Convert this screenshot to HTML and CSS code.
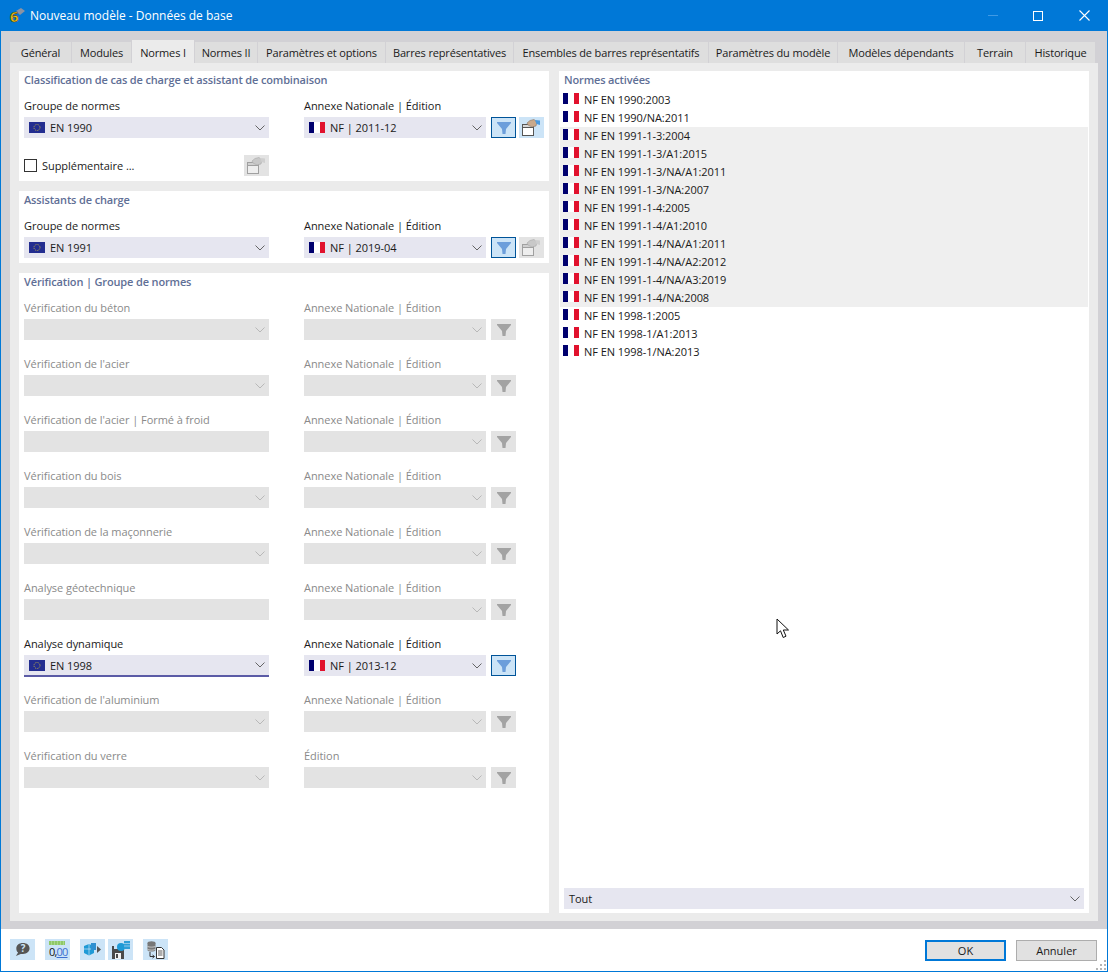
FILE: index.html
```html
<!DOCTYPE html>
<html lang="fr">
  <head>
    <meta charset="UTF-8" />
    <title>Nouveau modèle - Données de base</title>
    <link rel="stylesheet" href="styles.css">
  </head>
  <body>
    <svg class="defs" width="0" height="0">
      <symbol id="fr" viewBox="0 0 16 11">
        <rect width="6" height="11" fill="#00006e" />
        <rect x="5" width="6" height="11" fill="#fff" />
        <rect x="11" width="5" height="11" fill="#e1112d" />
      </symbol>
      <symbol id="eu" viewBox="0 0 16 11">
        <rect width="16" height="11" fill="#232d90" />
        <circle cx="8" cy="5.5" r="3" fill="none" stroke="#b7a94a" stroke-width="1" stroke-dasharray="1 .9" />
      </symbol>
      <symbol id="chev" viewBox="0 0 10 6">
        <path d="M.5 .5 5 5 9.5 .5" fill="none" stroke="currentColor" stroke-width=".9" />
      </symbol>
      <symbol id="funnel" viewBox="0 0 14 12">
        <path d="M0 0H14V1L9 7 8.500 12H5.500L5 7 0 1Z" fill="currentColor" />
      </symbol>
      <symbol id="pick" viewBox="0 0 19 17">
        <rect x=".5" y="5.5" width="11" height="11" fill="#fff" stroke="#555" />
        <rect x=".5" y="5.5" width="11" height="3" fill="#d8d8d8" stroke="#555" />
        <path d="M5 4 8 1.5 12 .5 15 3 14 7 10 8 6 6Z" fill="#c9a98c" stroke="#8a7565" stroke-width=".6" />
        <path d="M13 1 18 1.5 18 6 14.5 5Z" fill="#4d9ade" />
      </symbol>
      <symbol id="pick-off" viewBox="0 0 19 17">
        <rect x=".5" y="5.5" width="11" height="11" fill="#eee" stroke="#a0a0a0" />
        <rect x=".5" y="5.5" width="11" height="3" fill="#d0d0d0" stroke="#a0a0a0" />
        <path d="M5 4 8 1.5 12 .5 15 3 14 7 10 8 6 6Z" fill="#c8c8c8" stroke="#aaa" stroke-width=".6" />
        <path d="M13 1 18 1.5 18 6 14.5 5Z" fill="#cfcfcf" />
      </symbol>
    </svg>

    <div class="window">
      <div class="titlebar">
        <svg class="app-icon" width="16" height="24" viewBox="0 0 16 24">
          <path d="M7 7 12 4 16 7 11 11Z" fill="#8b93a3" />
          <text x="1" y="18" class="six">6</text>
        </svg>
        <span class="title">Nouveau modèle - Données de base</span>
        <div class="win-btns">
          <span class="win-min"></span>
          <span class="win-max"></span>
          <svg class="win-close" width="11" height="11" viewBox="0 0 11 11">
            <path d="M.5 .5 10.5 10.5M10.5 .5 .5 10.5" stroke="#fff" stroke-width="1.1" />
          </svg>
        </div>
      </div>

      <div class="main">
        <div class="tabs">
          <div class="tab">Général</div>
          <div class="tab">Modules</div>
          <div class="tab active">Normes I</div>
          <div class="tab">Normes II</div>
          <div class="tab">Paramètres et options</div>
          <div class="tab">Barres représentatives</div>
          <div class="tab">Ensembles de barres représentatifs</div>
          <div class="tab">Paramètres du modèle</div>
          <div class="tab">Modèles dépendants</div>
          <div class="tab">Terrain</div>
          <div class="tab">Historique</div>
        </div>

        <div class="tabpanel">
          <div class="left">
            <section class="panel">
              <h4>Classification de cas de charge et assistant de combinaison</h4>
              <div class="row">
                <div class="col-main">
                  <label>Groupe de normes</label>
                  <div class="select"><svg class="flag"><use href="#eu" /></svg><span>EN 1990</span><svg class="chev"><use href="#chev" /></svg></div>
                </div>
                <div class="col-side">
                  <label>Annexe Nationale | Édition</label>
                  <div class="select"><svg class="flag"><use href="#fr" /></svg><span>NF | 2011-12</span><svg class="chev"><use href="#chev" /></svg></div>
                </div>
                <div class="tool on"><svg class="funnel"><use href="#funnel" /></svg></div>
                <div class="tool pick"><svg class="pick-icon"><use href="#pick" /></svg></div>
              </div>
              <div class="extra">
                <span class="checkbox"></span>
                <span class="extra-label">Supplémentaire ...</span>
                <div class="tool off"><svg class="pick-icon"><use href="#pick-off" /></svg></div>
              </div>
            </section>

            <section class="panel">
              <h4>Assistants de charge</h4>
              <div class="row">
                <div class="col-main">
                  <label>Groupe de normes</label>
                  <div class="select"><svg class="flag"><use href="#eu" /></svg><span>EN 1991</span><svg class="chev"><use href="#chev" /></svg></div>
                </div>
                <div class="col-side">
                  <label>Annexe Nationale | Édition</label>
                  <div class="select"><svg class="flag"><use href="#fr" /></svg><span>NF | 2019-04</span><svg class="chev"><use href="#chev" /></svg></div>
                </div>
                <div class="tool on"><svg class="funnel"><use href="#funnel" /></svg></div>
                <div class="tool off"><svg class="pick-icon"><use href="#pick-off" /></svg></div>
              </div>
            </section>

            <section class="panel grow">
              <h4>Vérification | Groupe de normes</h4>
              <div class="rows">
                <div class="row disabled">
                  <div class="col-main"><label>Vérification du béton</label><div class="select"><svg class="chev"><use href="#chev" /></svg></div></div>
                  <div class="col-side"><label>Annexe Nationale | Édition</label><div class="select"><svg class="chev"><use href="#chev" /></svg></div></div>
                  <div class="tool off"><svg class="funnel"><use href="#funnel" /></svg></div>
                </div>
                <div class="row disabled">
                  <div class="col-main"><label>Vérification de l'acier</label><div class="select"><svg class="chev"><use href="#chev" /></svg></div></div>
                  <div class="col-side"><label>Annexe Nationale | Édition</label><div class="select"><svg class="chev"><use href="#chev" /></svg></div></div>
                  <div class="tool off"><svg class="funnel"><use href="#funnel" /></svg></div>
                </div>
                <div class="row disabled">
                  <div class="col-main"><label>Vérification de l'acier | Formé à froid</label><div class="select"></div></div>
                  <div class="col-side"><label>Annexe Nationale | Édition</label><div class="select"><svg class="chev"><use href="#chev" /></svg></div></div>
                  <div class="tool off"><svg class="funnel"><use href="#funnel" /></svg></div>
                </div>
                <div class="row disabled">
                  <div class="col-main"><label>Vérification du bois</label><div class="select"><svg class="chev"><use href="#chev" /></svg></div></div>
                  <div class="col-side"><label>Annexe Nationale | Édition</label><div class="select"><svg class="chev"><use href="#chev" /></svg></div></div>
                  <div class="tool off"><svg class="funnel"><use href="#funnel" /></svg></div>
                </div>
                <div class="row disabled">
                  <div class="col-main"><label>Vérification de la maçonnerie</label><div class="select"><svg class="chev"><use href="#chev" /></svg></div></div>
                  <div class="col-side"><label>Annexe Nationale | Édition</label><div class="select"><svg class="chev"><use href="#chev" /></svg></div></div>
                  <div class="tool off"><svg class="funnel"><use href="#funnel" /></svg></div>
                </div>
                <div class="row disabled">
                  <div class="col-main"><label>Analyse géotechnique</label><div class="select"></div></div>
                  <div class="col-side"><label>Annexe Nationale | Édition</label><div class="select"><svg class="chev"><use href="#chev" /></svg></div></div>
                  <div class="tool off"><svg class="funnel"><use href="#funnel" /></svg></div>
                </div>
                <div class="row">
                  <div class="col-main"><label>Analyse dynamique</label><div class="select focus"><svg class="flag"><use href="#eu" /></svg><span>EN 1998</span><svg class="chev"><use href="#chev" /></svg></div></div>
                  <div class="col-side"><label>Annexe Nationale | Édition</label><div class="select"><svg class="flag"><use href="#fr" /></svg><span>NF | 2013-12</span><svg class="chev"><use href="#chev" /></svg></div></div>
                  <div class="tool on"><svg class="funnel"><use href="#funnel" /></svg></div>
                </div>
                <div class="row disabled">
                  <div class="col-main"><label>Vérification de l'aluminium</label><div class="select"><svg class="chev"><use href="#chev" /></svg></div></div>
                  <div class="col-side"><label>Annexe Nationale | Édition</label><div class="select"><svg class="chev"><use href="#chev" /></svg></div></div>
                  <div class="tool off"><svg class="funnel"><use href="#funnel" /></svg></div>
                </div>
                <div class="row disabled">
                  <div class="col-main"><label>Vérification du verre</label><div class="select"><svg class="chev"><use href="#chev" /></svg></div></div>
                  <div class="col-side"><label>Édition</label><div class="select"><svg class="chev"><use href="#chev" /></svg></div></div>
                  <div class="tool off"><svg class="funnel"><use href="#funnel" /></svg></div>
                </div>
              </div>
            </section>
          </div>

          <section class="panel right">
            <h4>Normes activées</h4>
            <ul class="norms">
              <li><svg class="flag"><use href="#fr" /></svg>NF EN 1990:2003</li>
              <li><svg class="flag"><use href="#fr" /></svg>NF EN 1990/NA:2011</li>
              <li class="shade"><svg class="flag"><use href="#fr" /></svg>NF EN 1991-1-3:2004</li>
              <li class="shade"><svg class="flag"><use href="#fr" /></svg>NF EN 1991-1-3/A1:2015</li>
              <li class="shade"><svg class="flag"><use href="#fr" /></svg>NF EN 1991-1-3/NA/A1:2011</li>
              <li class="shade"><svg class="flag"><use href="#fr" /></svg>NF EN 1991-1-3/NA:2007</li>
              <li class="shade"><svg class="flag"><use href="#fr" /></svg>NF EN 1991-1-4:2005</li>
              <li class="shade"><svg class="flag"><use href="#fr" /></svg>NF EN 1991-1-4/A1:2010</li>
              <li class="shade"><svg class="flag"><use href="#fr" /></svg>NF EN 1991-1-4/NA/A1:2011</li>
              <li class="shade"><svg class="flag"><use href="#fr" /></svg>NF EN 1991-1-4/NA/A2:2012</li>
              <li class="shade"><svg class="flag"><use href="#fr" /></svg>NF EN 1991-1-4/NA/A3:2019</li>
              <li class="shade"><svg class="flag"><use href="#fr" /></svg>NF EN 1991-1-4/NA:2008</li>
              <li><svg class="flag"><use href="#fr" /></svg>NF EN 1998-1:2005</li>
              <li><svg class="flag"><use href="#fr" /></svg>NF EN 1998-1/A1:2013</li>
              <li><svg class="flag"><use href="#fr" /></svg>NF EN 1998-1/NA:2013</li>
            </ul>
            <div class="select all"><span>Tout</span><svg class="chev"><use href="#chev" /></svg></div>
          </section>
        </div>
      </div>

      <div class="footer">
        <div class="tool foot">
          <svg width="15" height="15" viewBox="0 0 17 16">
            <path d="M9 .5C13.500 .5 16.500 3 16.500 6.500S13.500 13 9 13H6.500L1 15.500 3.500 11.500C2 10.500 1.500 8.500 1.500 6.500 1.500 3 4.500 .5 9 .5Z" fill="#555" />
            <text x="9" y="11" text-anchor="middle" class="q">?</text>
          </svg>
        </div>
        <div class="tool foot gap10 zero">
          <span class="ruler"></span>
          <span class="zero-text">0,<u>00</u></span>
        </div>
        <div class="tool foot gap10">
          <svg width="17" height="13" viewBox="0 0 17 13">
            <path d="M0 3 5 1 10 3V10L5 12.500 0 10Z" fill="#1f9ad6" />
            <path d="M5 1V12.500M0 6H10" stroke="#cce4f7" stroke-width=".7" />
            <rect x="7" y="0" width="5" height="7" fill="#2f8fd0" />
            <path d="M13 3 17 6.500 13 10Z" fill="#555" />
          </svg>
        </div>
        <div class="tool foot gap3">
          <svg width="18" height="18" viewBox="0 0 18 18">
            <path d="M0 5H11L12 6V18H0Z" fill="#4a4a4a" />
            <rect x="2" y="5" width="4" height="3" fill="#cce4f7" />
            <rect x="3" y="12" width="6" height="6" fill="#f2f2f2" />
            <rect x="4" y="13" width="2" height="4" fill="#4a4a4a" />
            <circle cx="9" cy="6" r="4" fill="#1f9ad6" />
            <rect x="12" y="0" width="6" height="8" fill="#2f9fd8" />
            <path d="M12 2.500H18M12 5H18" stroke="#cce4f7" stroke-width=".6" />
          </svg>
        </div>
        <div class="tool foot gap10">
          <svg width="18" height="18" viewBox="0 0 18 18">
            <ellipse cx="4.500" cy="2" rx="4" ry="1.700" fill="#777" />
            <path d="M.5 2V9C.5 11 8.500 11 8.500 9V2" fill="#777" />
            <path d="M.5 5C.5 6.500 8.500 6.500 8.500 5M.5 8C.5 9.500 8.500 9.500 8.500 8" fill="none" stroke="#e8e8e8" stroke-width=".7" />
            <path d="M3 11V15.500H7M5.500 14 7.500 15.500 5.500 17" fill="none" stroke="#333" />
            <path d="M9.500 6.500H14.500L17 9V17.500H9.500Z" fill="#fff" stroke="#333" />
            <path d="M11 10H15.500M11 12H15.500M11 14H15.500" stroke="#333" stroke-width=".8" />
          </svg>
        </div>
        <div class="actions">
          <button class="btn default">OK</button>
          <button class="btn">Annuler</button>
        </div>
        <svg class="grip" width="11" height="11" viewBox="0 0 11 11">
          <path d="M8 0h2v2H8zM4 4h2v2H4zM8 4h2v2H8zM0 8h2v2H0zM4 8h2v2H4zM8 8h2v2H8z" fill="#b5b5b5" />
        </svg>
      </div>

      <svg class="cursor" width="14" height="21" viewBox="0 0 14 21">
        <path d="M1 1V16L4.500 12.800 7.200 19.500 10 18.200 7.300 12H12.500Z" fill="#fff" stroke="#111" stroke-width="1" />
      </svg>
    </div>
  </body>
</html>
```
FILE: styles.css
```css
* {
  box-sizing: border-box;
}
html,
body {
  margin: 0;
  height: 100%;
  overflow: hidden;
}
body {
  font-family: "Open Sans", "Liberation Sans", sans-serif;
  font-size: 11px;
  letter-spacing: -0.05px;
  color: #1a1a1a;
  background: white;
}
.defs {
  position: absolute;
}
.window {
  position: relative;
  width: 1108px;
  height: 972px;
  border: 1px solid #0078d7;
  border-top: 0;
  display: flex;
  flex-direction: column;
}

/* title bar */
.titlebar {
  height: 31px;
  flex: none;
  background: #0078d7;
  color: white;
  display: flex;
  align-items: center;
  padding-left: 8px;
}
.app-icon {
  margin-right: 5px;
}
.six {
  font-size: 15px;
  font-weight: 700;
  fill: #f5c518;
  stroke: #4a3c0c;
  stroke-width: 0.6px;
}
.title {
  font-size: 12px;
  letter-spacing: 0;
}
.win-btns {
  margin-left: auto;
  display: flex;
  align-items: center;
  padding-right: 17px;
}
.win-min {
  width: 10px;
  height: 1px;
  background: #3f9ae5;
  margin-right: 35px;
}
.win-max {
  width: 10px;
  height: 10px;
  border: 1px solid white;
  margin-right: 36px;
}

/* tabs */
.main {
  flex: none;
  height: 898px;
  background: #d2d1d5;
  padding: 9px 9px 8px;
  display: flex;
  flex-direction: column;
}
.tabs {
  height: 23px;
  flex: none;
  display: grid;
  grid-template-columns: 61px 59px 62px 62px 127px 127px 194px 128px 126px 60px 69px;
  column-gap: 1px;
  letter-spacing: -0.15px;
}
.tab {
  margin-top: 2px;
  background: #dedede;
  text-align: center;
  line-height: 21px;
}
.tab.active {
  margin-top: 0;
  background: #ebebeb;
  line-height: 25px;
}
.tabpanel {
  flex: 1;
  background: #ebebeb;
  padding: 8px 9px;
  display: flex;
  gap: 10px;
}
.left {
  width: 530px;
  display: flex;
  flex-direction: column;
  gap: 10px;
}
.panel {
  background: white;
  padding: 0 5px 5px;
}
.panel h4 {
  margin: 0 0 9px;
  height: 18px;
  line-height: 18px;
  font-size: 11px;
  font-weight: 600;
  letter-spacing: -0.15px;
  color: #5f6f96;
}
.grow {
  flex: 1;
}

/* form rows */
.rows {
  display: flex;
  flex-direction: column;
  gap: 16px;
}
.row {
  display: flex;
  align-items: flex-end;
}
.col-main {
  width: 245px;
  margin-right: 35px;
}
.col-side {
  width: 182px;
  margin-right: 5px;
}
label {
  display: block;
  height: 19px;
  line-height: 15px;
}
.select {
  height: 21px;
  background: #e6e6f0;
  display: flex;
  align-items: center;
  padding-left: 5px;
}
.select.focus {
  height: 22px;
  margin-bottom: -1px;
  border-bottom: 2px solid #5b5ba6;
}
.flag {
  width: 16px;
  height: 11px;
  flex: none;
  margin-right: 5px;
}
.chev {
  width: 10px;
  height: 6px;
  margin-left: auto;
  margin-right: 4px;
  color: #555;
}
.tool {
  width: 25px;
  height: 21px;
  flex: none;
  display: flex;
  align-items: center;
  justify-content: center;
}
.tool.on {
  background: #cce4f7;
  border: 1px solid #005499;
  color: #6c9edb;
}
.tool.pick {
  background: #cce4f7;
  margin-left: 3px;
}
.tool.off {
  background: #e3e3e3;
  color: #a3a3a3;
}
.row > .tool.off:last-child:not(:nth-child(3)) {
  margin-left: 3px;
}
.funnel {
  width: 14px;
  height: 12px;
}
.pick-icon {
  width: 19px;
  height: 17px;
}
.disabled label {
  color: #8a8a8a;
}
.disabled .select {
  background: #e3e3e3;
}
.disabled .chev {
  color: #b3b3b3;
}
.extra {
  display: flex;
  align-items: center;
  margin-top: 17px;
}
.checkbox {
  width: 13px;
  height: 13px;
  border: 1px solid #333;
  background: white;
  margin-right: 5px;
}
.extra .tool {
  margin-left: auto;
  margin-right: 275px;
}

/* right list */
.right {
  width: 530px;
  display: flex;
  flex-direction: column;
  padding-bottom: 4px;
}
.right h4 {
  margin-bottom: 2px;
}
.norms {
  list-style: none;
  margin: 0 -4px;
  padding: 0;
  flex: 1;
}
.norms li {
  height: 18px;
  display: flex;
  align-items: center;
  padding-left: 3px;
  padding-bottom: 2px;
}
.norms li.shade {
  background: #efefef;
}
.norms .flag {
  margin-right: 5px;
  margin-top: -1px;
}

/* footer */
.footer {
  position: relative;
  flex: 1;
  display: flex;
  align-items: flex-start;
  padding: 10px 9px 0;
}
.tool.foot {
  background: #cce4f7;
  position: relative;
}
.gap10 {
  margin-left: 10px;
}
.gap3 {
  margin-left: 3px;
}
.q {
  font-size: 11px;
  font-weight: 700;
  fill: #cce4f7;
}
.ruler {
  position: absolute;
  top: 2px;
  left: 4px;
  width: 16px;
  height: 4px;
  background: repeating-linear-gradient(90deg, #8fc868 0 2px, #a9d88a 2px 3px);
}
.zero-text {
  position: absolute;
  top: 6px;
  left: 4px;
  font-size: 11px;
  line-height: 13px;
  letter-spacing: -0.8px;
  color: #111;
}
.zero-text u {
  color: #3d6fd0;
}
.actions {
  margin-left: auto;
  display: flex;
  gap: 10px;
  margin-top: 1px;
  margin-right: 1px;
}
.btn {
  width: 81px;
  height: 21px;
  background: #e1e1e1;
  border: 1px solid #adadad;
  font-family: inherit;
  font-size: 11px;
  color: #1a1a1a;
  padding: 0;
}
.btn.default {
  border: 2px solid #0078d7;
}
.grip {
  position: absolute;
  right: 0;
  bottom: 0;
}
.cursor {
  position: absolute;
  left: 775px;
  top: 618px;
}
```
